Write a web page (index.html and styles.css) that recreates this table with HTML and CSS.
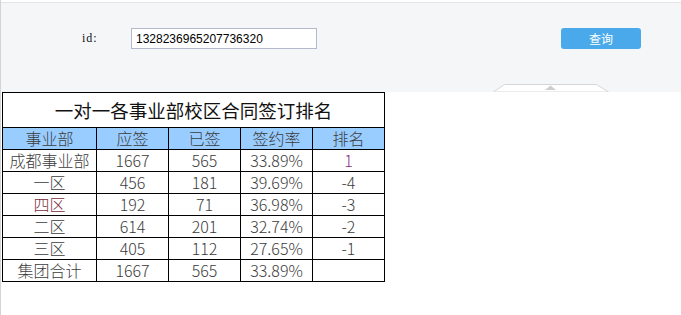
FILE: index.html
```html
<!DOCTYPE html>
<html lang="zh-CN">
<head>
<meta charset="utf-8">
<title>一对一各事业部校区合同签订排名</title>
<link rel="stylesheet" href="styles.css">
</head>
<body>
<div class="page">
  <div class="query-panel">
    <form class="query-form">
      <label class="id-label" for="id">id:</label>
      <input class="id-input" id="id" type="text" value="1328236965207736320">
      <button class="query-btn" type="button">查询</button>
    </form>
    <svg class="collapse-tab" width="116" height="9" viewBox="0 0 116 9">
      <polygon points="0.5,9 11.5,1.5 103.5,1.5 115.5,9" fill="#fff" stroke="#d6d6d6" stroke-width="1"/>
      <polygon points="52,7 57.5,2.5 63,7" fill="#cdcdcd"/>
    </svg>
  </div>
  <table class="rank-table">
    <colgroup>
      <col class="c1"><col class="c2"><col class="c3"><col class="c4"><col class="c5">
    </colgroup>
    <thead>
      <tr class="title-row"><th colspan="5">一对一各事业部校区合同签订排名</th></tr>
      <tr class="head-row"><th>事业部</th><th>应签</th><th>已签</th><th>签约率</th><th>排名</th></tr>
    </thead>
    <tbody>
      <tr><td>成都事业部</td><td>1667</td><td>565</td><td>33.89%</td><td class="rank-top">1</td></tr>
      <tr><td>一区</td><td>456</td><td>181</td><td>39.69%</td><td>-4</td></tr>
      <tr><td class="zone-red">四区</td><td>192</td><td>71</td><td>36.98%</td><td>-3</td></tr>
      <tr><td>二区</td><td>614</td><td>201</td><td>32.74%</td><td>-2</td></tr>
      <tr><td>三区</td><td>405</td><td>112</td><td>27.65%</td><td>-1</td></tr>
      <tr><td>集团合计</td><td>1667</td><td>565</td><td>33.89%</td><td></td></tr>
    </tbody>
  </table>
</div>
</body>
</html>
```

FILE: styles.css
```css
html, body {
  margin: 0;
  padding: 0;
  background: #fff;
}
.page {
  position: relative;
  min-height: 315px;
  border-left: 1px solid #d4d4d4;
  box-sizing: border-box;
}
.query-panel {
  position: relative;
  height: 92px;
  box-sizing: border-box;
  background: #f5f6f8;
  border-top: 2px solid #fff;
}
.query-panel::before {
  content: "";
  display: block;
  height: 1px;
  background: #e3e5e9;
}
.query-form {
  display: flex;
  align-items: center;
  height: 21px;
  margin: 25px 0 0 0;
  padding-left: 81px;
}
.id-label {
  font-family: "Liberation Serif", "Times New Roman", serif;
  font-size: 12px;
  letter-spacing: 1px;
  color: #111;
  width: 49px;
}
.id-input {
  width: 186px;
  height: 21px;
  box-sizing: border-box;
  border: 1px solid #b4b9cd;
  background: #fff;
  padding: 0 4px;
  font-family: "Liberation Sans", Arial, sans-serif;
  font-size: 12px;
  color: #000;
  outline: none;
}
.query-btn {
  margin-left: 244px;
  width: 80px;
  height: 21px;
  border: none;
  border-radius: 3px;
  background: #4aa9eb;
  color: #fff;
  font-family: "Noto Sans CJK SC", sans-serif;
  font-size: 12px;
  padding: 0;
}
.collapse-tab {
  position: absolute;
  left: 492px;
  bottom: 0;
  display: block;
}
.rank-table {
  margin-left: 1px;
  border-collapse: collapse;
  table-layout: fixed;
  width: 383px;
  font-family: "Noto Sans CJK SC", sans-serif;
  font-weight: 300;
  color: #3c3c3c;
}
.c1 { width: 94px; }
.c2, .c3, .c4, .c5 { width: 72px; }
.rank-table th,
.rank-table td {
  border: 1px solid #000;
  padding: 0;
  text-align: center;
  font-size: 16px;
  font-weight: 300;
  line-height: 21px;
  height: 21px;
  white-space: nowrap;
}
.title-row th {
  height: 34px;
  font-size: 18.5px;
  font-weight: 400;
  color: #111;
  background: #fff;
}
.head-row th {
  background: #99ccff;
  color: #3c3c3c;
}
.rank-top { color: #8b2b8b; }
.zone-red { color: #7a2e3a; }
```
